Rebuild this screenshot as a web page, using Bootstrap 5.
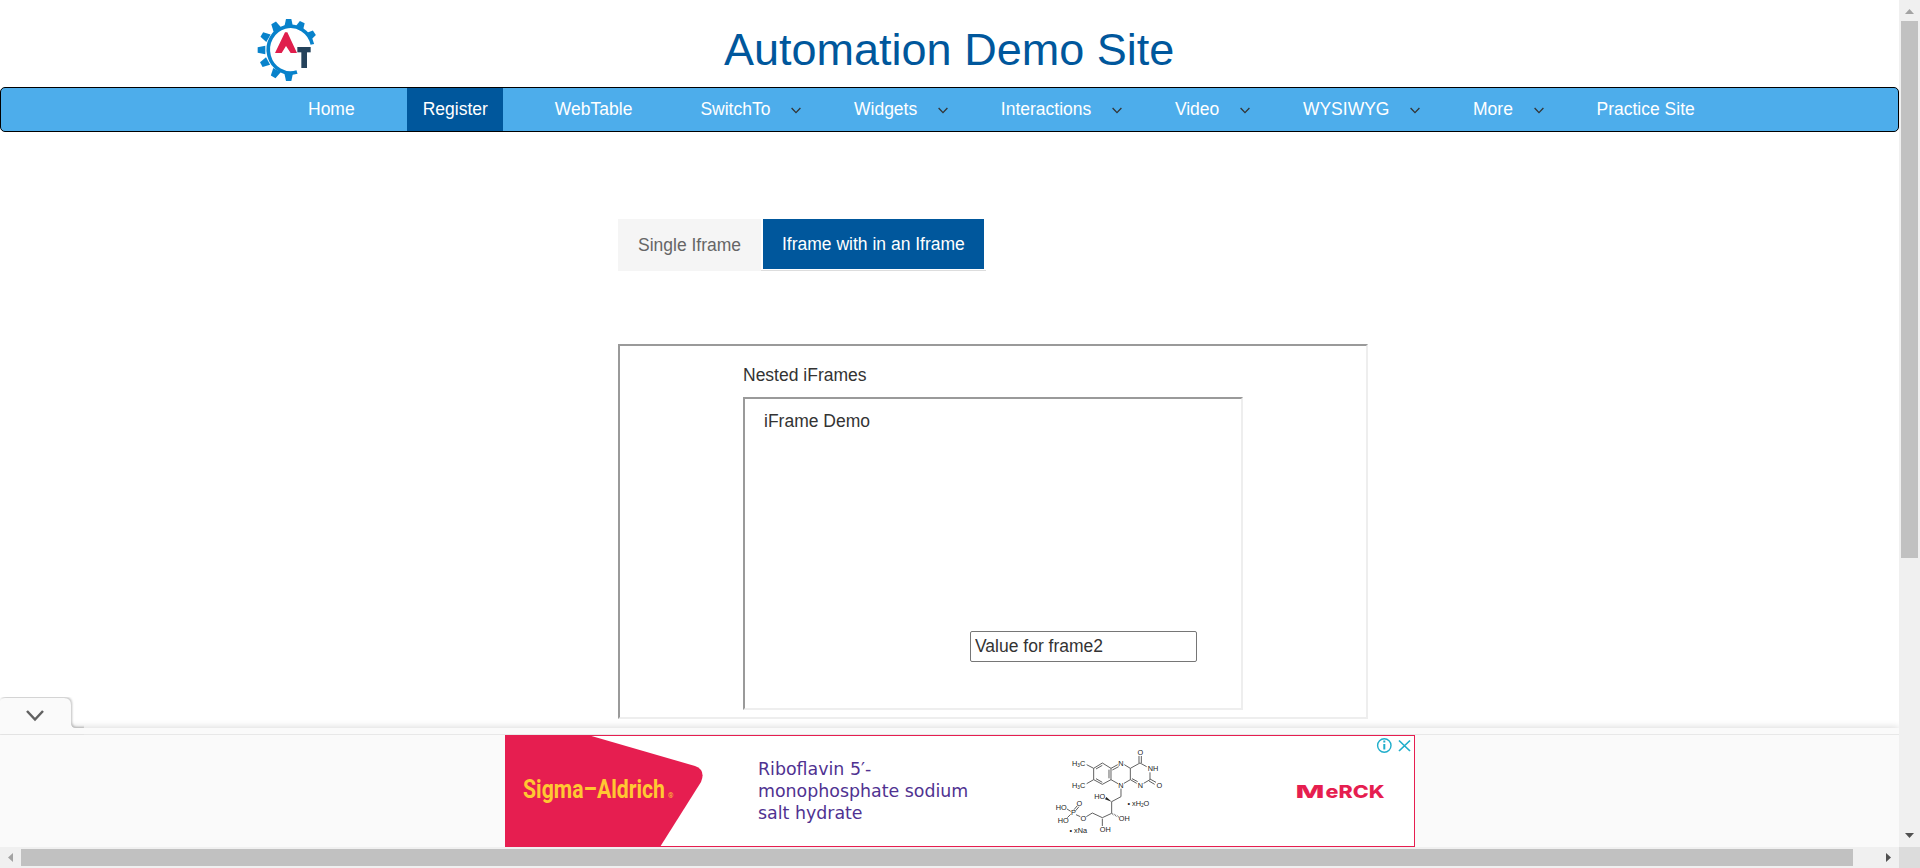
<!DOCTYPE html>
<html lang="en">
<head>
<meta charset="utf-8">
<meta name="viewport" content="width=device-width, initial-scale=1">
<title>Frames</title>
<link href="https://cdn.jsdelivr.net/npm/bootstrap@5.3.0/dist/css/bootstrap.min.css" rel="stylesheet">
<style>
body{font-family:"Liberation Sans",Arial,sans-serif;font-size:17.5px;line-height:25px;color:#333;background:#fff}
.shell{display:grid;grid-template:847px 21px / 1899px 21px;width:1920px;height:868px}
.site-head{height:87px;padding:16px 0 0 257px}
.site-head h1{font-size:45px;line-height:66px;font-weight:400;color:#00579c;margin:1px 0 0 407px}
.gear{margin-top:3px}
.main-nav{height:45px;background:#4dadeb;border:1px solid #000;border-radius:5px;padding:0 0 0 291px}
.main-nav .nav-link{color:#fff;padding:0 16px;line-height:43px;height:43px;margin-right:36px;white-space:nowrap}
.main-nav .nav-link.active{background:#00579c;padding-right:15px}
.main-nav .nav-link.has-menu{padding-right:0;margin-right:36.600px}
.main-nav .has-menu svg{margin-left:21px}
.frame-tabs{margin:87px 0 0 618px;height:52px}
.frame-tabs a{text-decoration:none;white-space:nowrap}
.tab-off{width:143px;height:52px;background:#f5f5f5;color:#666;padding:14px 0 0 20px}
.tab-wrap{width:225px;border-bottom:1px solid #ddd;padding:0 2px;height:52px}
.tab-on{display:block;width:221px;height:50px;background:#00579c;color:#fff;padding:13px 0 0 19px}
.inset-box{border:2px solid;border-color:#9a9a9a #eee #eee #9a9a9a}
.outer-frame{width:750px;height:375px;margin:73px 0 0 618px;padding:17px 0 0 123px}
.inner-frame{width:500px;height:313px;margin-top:9px;padding:10px 0 0 19px}
.inner-frame input{display:block;width:227px;height:31px;margin:197px 0 0 206px;border:1px solid #767676;border-radius:2px;padding:0 4px;color:#333;background:#fff}
.ad-dock{left:0;bottom:0;width:1899px;height:119px;background:#fafafa;box-shadow:0 -1px 7px rgba(0,0,0,.14)}
.dock-tab{left:0;top:-31px}
.dock-line{height:7px;border-bottom:1px solid #e8e8e8}
.ad-unit{width:910px;height:112px;margin-left:505px;background:#fff;border:1px solid #e61e50}
.ad-copy{font-family:"DejaVu Sans",Verdana,sans-serif;font-size:17.4px;line-height:22px;color:#503291;width:230px;padding-top:22px;margin-left:54px}
.track{background:#f0f0f0}
.corner{background:#dcdcdc}
.v-thumb{width:17px;height:537px;background:#c1c1c1;margin-left:2px}
.h-thumb{width:1832px;height:17px;background:#c1c1c1}
</style>
</head>
<body class="overflow-hidden">
<div class="shell">
  <div class="position-relative overflow-hidden">
    <header class="site-head d-flex align-items-start">
      <svg class="gear" width="60" height="64" viewBox="51 27 180 192">
        <defs><path id="tooth" d="M-13 -70 L-8 -93 L8 -93 L13 -70Z" fill="#0882cb"/></defs>
        <path d="M171 186 A67 70 0 1 1 217 103" fill="none" stroke="#0882cb" stroke-width="11"/>
        <g transform="translate(146 120)">
          <use href="#tooth"/><use href="#tooth" transform="rotate(26)"/><use href="#tooth" transform="rotate(56)"/>
          <use href="#tooth" transform="rotate(-29)"/><use href="#tooth" transform="rotate(-60)"/><use href="#tooth" transform="rotate(-90)"/>
          <use href="#tooth" transform="rotate(-118)"/><use href="#tooth" transform="rotate(-150)"/><use href="#tooth" transform="rotate(-180)"/>
        </g>
        <polygon points="135,67 142,67 171,129 152,129 138,108 125,129 105,129" fill="#e01e4c"/>
        <rect x="172" y="111" width="40" height="16" fill="#25425b"/><rect x="184" y="111" width="17" height="63" fill="#25425b"/>
      </svg>
      <h1>Automation Demo Site</h1>
    </header>
    <nav class="main-nav d-flex">
      <a class="nav-link" href="#">Home</a>
      <a class="nav-link active" href="#">Register</a>
      <a class="nav-link" href="#">WebTable</a>
      <a class="nav-link has-menu" href="#">SwitchTo<svg width="10" height="7" viewBox="0 0 10 7"><path d="M.6 1l4.4 4.600L9.400 1" fill="none" stroke="#333" stroke-width="1.300"/></svg></a>
      <a class="nav-link has-menu" href="#">Widgets<svg width="10" height="7" viewBox="0 0 10 7"><path d="M.6 1l4.400 4.600L9.400 1" fill="none" stroke="#333" stroke-width="1.300"/></svg></a>
      <a class="nav-link has-menu" href="#">Interactions<svg width="10" height="7" viewBox="0 0 10 7"><path d="M.6 1l4.400 4.600L9.400 1" fill="none" stroke="#333" stroke-width="1.300"/></svg></a>
      <a class="nav-link has-menu" href="#">Video<svg width="10" height="7" viewBox="0 0 10 7"><path d="M.6 1l4.400 4.600L9.400 1" fill="none" stroke="#333" stroke-width="1.300"/></svg></a>
      <a class="nav-link has-menu" href="#">WYSIWYG<svg width="10" height="7" viewBox="0 0 10 7"><path d="M.6 1l4.400 4.600L9.400 1" fill="none" stroke="#333" stroke-width="1.300"/></svg></a>
      <a class="nav-link has-menu" href="#">More<svg width="10" height="7" viewBox="0 0 10 7"><path d="M.6 1l4.400 4.600L9.400 1" fill="none" stroke="#333" stroke-width="1.300"/></svg></a>
      <a class="nav-link" href="#">Practice Site</a>
    </nav>
    <div class="frame-tabs d-flex">
      <a class="tab-off" href="#">Single Iframe</a>
      <div class="tab-wrap"><a class="tab-on" href="#">Iframe with in an Iframe</a></div>
    </div>
    <section class="outer-frame inset-box">
      <div>Nested iFrames</div>
      <div class="inner-frame inset-box">
        <div>iFrame Demo</div>
        <input type="text" value="Value for frame2" aria-label="Value">
      </div>
    </section>

    <aside class="ad-dock position-absolute">
      <svg class="dock-tab position-absolute" width="84" height="38" viewBox="0 0 84 38">
        <path d="M0 4Q1 1 5 1H64Q71 1 71 8V26Q71 31 76 31H84V37H0Z" fill="#fafafa" style="filter:drop-shadow(1px -1px 1px rgba(0,0,0,.25))"/>
        <path d="M27 14l8 8.500 8-8.500" fill="none" stroke="#616161" stroke-width="2.500"/>
      </svg>
      <div class="dock-line"></div>
      <div class="ad-unit d-flex position-relative">
        <svg width="198" height="110" viewBox="506 736 198 110">
          <path d="M505 735H588L695 766Q706 770 701 782L660 847H505Z" fill="#e61e50"/>
          <text x="523" y="797.500" font-family="Roboto" font-weight="700" font-size="25" fill="#ffc832" textLength="142" lengthAdjust="spacingAndGlyphs">Sigma–Aldrich</text>
          <text x="668" y="798" font-family="Roboto" font-size="7" fill="#ffc832">®</text>
        </svg>
        <div class="ad-copy">Riboflavin 5′-<br>monophosphate sodium<br>salt hydrate</div>
        <svg class="ms-auto" width="421" height="110" viewBox="993 736 421 110">
          <g transform="translate(1040 735) scale(.333333)">
            <g fill="none" stroke="#555" stroke-width="2.800">
              <path d="M187 84L161 100V134L187 148L213 134V100ZM213 100L233 89M253 89L271 100V134L252 145M213 134L234 146M271 100L300 84L320 95M330 112V134L311 145M290 145L271 134"/>
              <path d="M187 91L168 102M168 131L187 142M207 130V104M217 105L236 95M276 131L293 140M297 84V63M304 84V63M330 132L348 142M327 138L344 148"/>
              <path d="M161 100L140 89M161 134L140 146M243 161V185L215 200V235L187 248L157 234L139 245M121 245L108 239M187 251V273M102 224L112 212M107 227L117 215M92 229L81 222M92 238L82 248"/>
              <path d="M217 236L236 246" stroke-width="5" stroke-dasharray="2 3"/>
            </g>
            <path d="M215 200L195 193L199 186Z" fill="#222"/>
            <g font-family="Liberation Sans" font-size="22" fill="#222" text-anchor="middle">
              <text x="116" y="92">H<tspan font-size="14" dy="4">3</tspan><tspan dy="-4">C</tspan></text>
              <text x="116" y="159">H<tspan font-size="14" dy="4">3</tspan><tspan dy="-4">C</tspan></text>
              <text x="243" y="92">N</text><text x="243" y="160">N</text><text x="301" y="158">N</text>
              <text x="339" y="109">NH</text><text x="301" y="59">O</text><text x="358" y="158">O</text>
              <text x="179" y="191">HO</text><text x="253" y="257">OH</text><text x="196" y="291">OH</text>
              <text x="130" y="258">O</text><text x="100" y="241">P</text><text x="118" y="213">O</text>
              <text x="64" y="224">HO</text><text x="70" y="264">HO</text>
              <text x="295" y="213">• xH<tspan font-size="14" dy="4">2</tspan><tspan dy="-4">O</tspan></text>
              <text x="115" y="294">• xNa</text>
            </g>
          </g>
          <text y="797.500" font-family="Inter" font-weight="800" font-size="18" fill="#e61e50"><tspan x="1295.500" textLength="29" lengthAdjust="spacingAndGlyphs">M</tspan><tspan x="1325.500" textLength="59" lengthAdjust="spacingAndGlyphs">eRCK</tspan></text>
          <g fill="none" stroke="#20aecb" stroke-width="1.400">
            <circle cx="1384.300" cy="745.500" r="6.700"/><path d="M1384.300 744v5.500M1384.300 740.500v2" stroke-width="2"/>
            <path d="M1399 740.500l11 10.500M1410 740.500l-11 10.500" stroke-width="1.700"/>
          </g>
        </svg>
      </div>
    </aside>
  </div>
  <div class="track d-flex flex-column justify-content-between">
    <svg width="21" height="21"><path d="M6 14l4.500-5 4.500 5Z" fill="#a3a3a3"/></svg>
    <div class="v-thumb mb-auto"></div>
    <svg width="21" height="21"><path d="M6 7h9l-4.500 5Z" fill="#505050"/></svg>
  </div>
  <div class="track d-flex align-items-center">
    <svg width="21" height="21"><path d="M13 6v9l-5-4.500Z" fill="#a3a3a3"/></svg>
    <div class="h-thumb"></div>
    <svg class="ms-auto" width="21" height="21"><path d="M8 6v9l5-4.500Z" fill="#505050"/></svg>
  </div>
  <div class="corner"></div>
</div>
<script src="https://cdn.jsdelivr.net/npm/bootstrap@5.3.0/dist/js/bootstrap.bundle.min.js"></script>
</body>
</html>
